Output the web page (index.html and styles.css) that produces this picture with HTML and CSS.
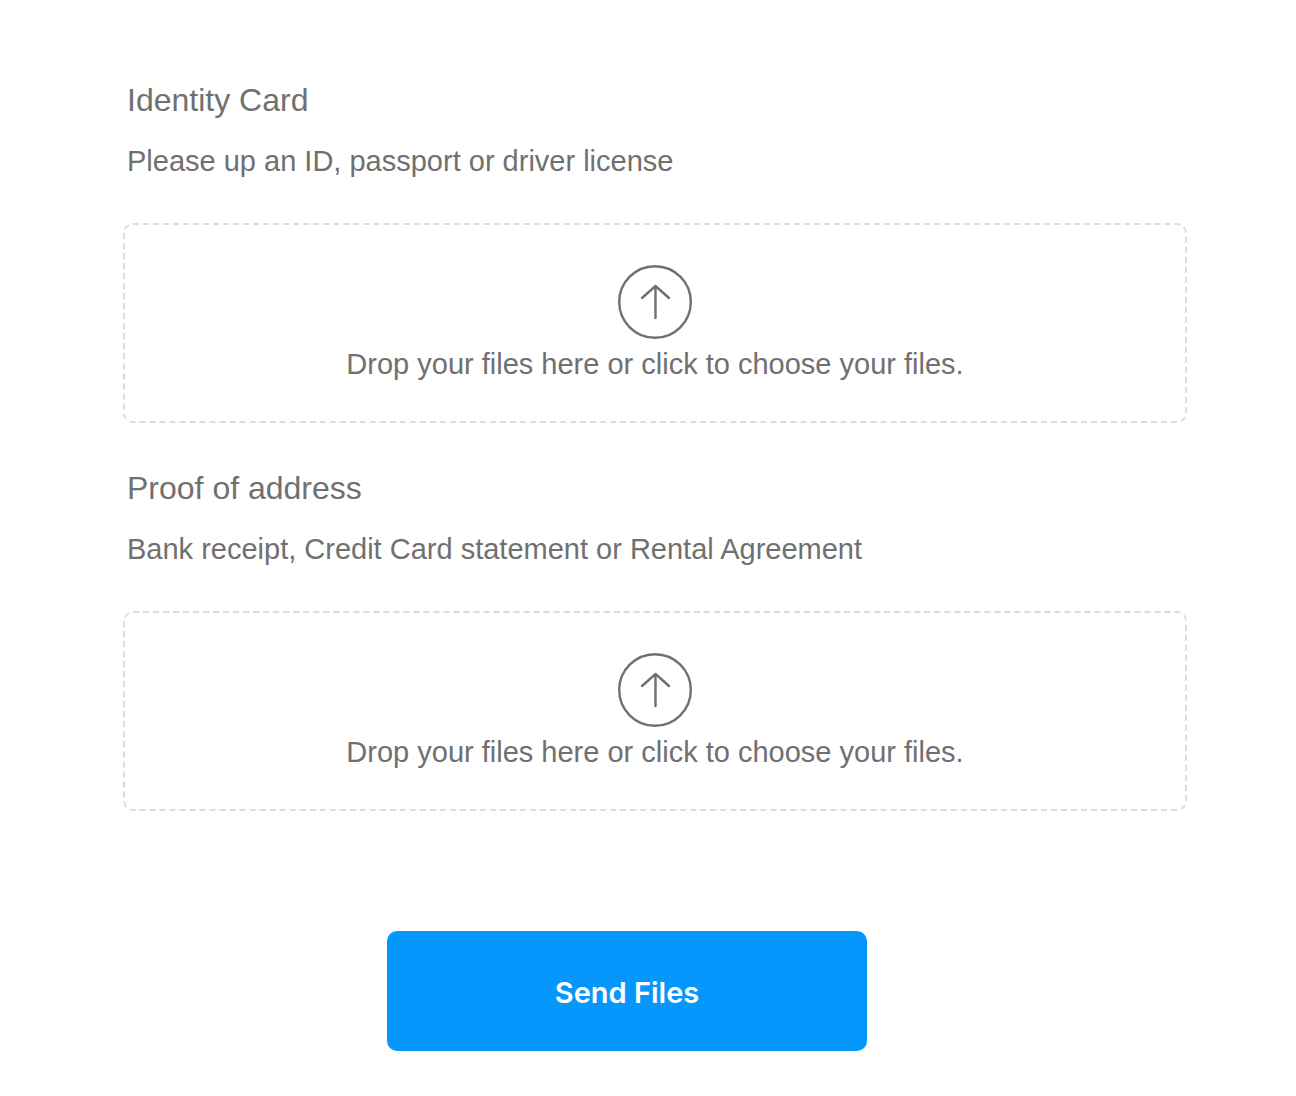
FILE: index.html
```html
<!DOCTYPE html>
<html lang="en">
<head>
    <meta charset="UTF-8">
    <meta name="viewport" content="width=device-width, initial-scale=1.0">
    <title>Upload Documents</title>
    <link rel="stylesheet" href="styles.css">
</head>
<body>
    <form class="upload-form">
        <section class="upload-group">
            <h2>Identity Card</h2>
            <p class="hint" id="identity-hint">Please up an ID, passport or driver license</p>
            <label class="dropzone" for="identity-file">
                <svg class="upload-icon" viewBox="0 0 74 74" aria-hidden="true">
                    <circle cx="37" cy="37" r="35.8"/>
                    <path d="M37.5 53V21M24 33L37.500 21L51 33"/>
                </svg>
                <span>Drop your files here or click to choose your files.</span>
                <input type="file" id="identity-file" aria-describedby="identity-hint" multiple>
            </label>
        </section>
        <section class="upload-group">
            <h2>Proof of address</h2>
            <p class="hint" id="address-hint">Bank receipt, Credit Card statement or Rental Agreement</p>
            <label class="dropzone" for="address-file">
                <svg class="upload-icon" viewBox="0 0 74 74" aria-hidden="true">
                    <circle cx="37" cy="37" r="35.8"/>
                    <path d="M37.5 53V21M24 33L37.500 21L51 33"/>
                </svg>
                <span>Drop your files here or click to choose your files.</span>
                <input type="file" id="address-file" aria-describedby="address-hint" multiple>
            </label>
        </section>
        <button class="send-button" type="submit">Send Files</button>
    </form>
</body>
</html>
```
FILE: styles.css
```css
* {
    box-sizing: border-box;
}
body {
    margin: 0;
    background: #fff;
    color: #707070;
    font-family: "Liberation Sans", Arial, sans-serif;
    font-size: 29px;
}
.upload-form {
    display: flex;
    flex-direction: column;
    gap: 45px;
    padding: 80px 109px 44px 123px;
}
h2 {
    margin: 0 4px 21px;
    font-size: 32px;
    font-weight: normal;
    line-height: 40px;
}
.hint {
    margin: 0 4px 42px;
    line-height: 40px;
}
.dropzone {
    display: flex;
    flex-direction: column;
    align-items: center;
    padding: 40px 20px 37px;
    border: 2px dashed #dcdcdc;
    border-radius: 10px;
    line-height: 40px;
    text-align: center;
    cursor: pointer;
}
.dropzone input {
    position: absolute;
    width: 1px;
    height: 1px;
    opacity: 0;
}
.dropzone:focus-within {
    border-color: #0696fb;
}
.upload-icon {
    width: 74px;
    height: 74px;
    margin-bottom: 5px;
    fill: none;
    stroke: #707070;
    stroke-width: 2.4;
    stroke-linecap: round;
    stroke-linejoin: round;
}
.send-button {
    width: 480px;
    max-width: 100%;
    height: 120px;
    margin: 75px 56px 0 0;
    padding: 2px 0 0;
    align-self: center;
    border: none;
    border-radius: 10px;
    background: #0597fc;
    color: #fff;
    font-family: Inter, sans-serif;
    font-size: 29px;
    font-weight: 600;
    cursor: pointer;
}
```
